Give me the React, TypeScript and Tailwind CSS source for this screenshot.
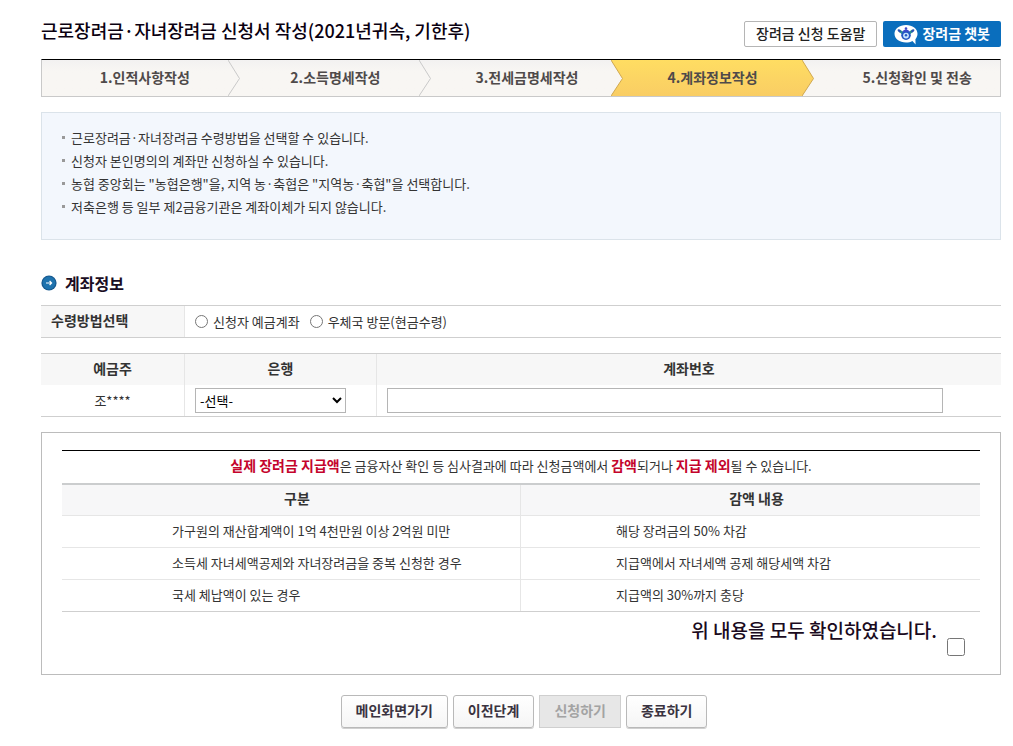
import { useState } from 'react';

const steps = [
  { label: '1.인적사항작성', pad: 'pl-5' },
  { label: '2.소득명세작성', pad: 'pl-3' },
  { label: '3.전세금명세작성', pad: 'pl-3' },
  { label: '4.계좌정보작성', pad: '' },
  { label: '5.신청확인 및 전송', pad: 'pl-5' },
];

const notices = [
  '근로장려금·자녀장려금 수령방법을 선택할 수 있습니다.',
  '신청자 본인명의의 계좌만 신청하실 수 있습니다.',
  '농협 중앙회는 "농협은행"을, 지역 농·축협은 "지역농·축협"을 선택합니다.',
  '저축은행 등 일부 제2금융기관은 계좌이체가 되지 않습니다.',
];

const deductions = [
  { reason: '가구원의 재산합계액이 1억 4천만원 이상 2억원 미만', detail: '해당 장려금의 50% 차감' },
  { reason: '소득세 자녀세액공제와 자녀장려금을 중복 신청한 경우', detail: '지급액에서 자녀세액 공제 해당세액 차감' },
  { reason: '국세 체납액이 있는 경우', detail: '지급액의 30%까지 충당' },
];

const CURRENT_STEP = 3;

const StepArrow = ({ index }: { index: number }) => {
  const active = index === CURRENT_STEP;
  const beforeActive = index === CURRENT_STEP - 1;
  return (
    <svg
      className={`h-full w-3 shrink-0 ${beforeActive ? 'bg-linear-to-b from-[#ffdd62] to-[#f9cd64]' : ''}`}
      viewBox="0 0 12 36"
      preserveAspectRatio="none"
      aria-hidden="true"
    >
      <defs>
        <linearGradient id={`step-${index}`} x1="0" y1="0" x2="0" y2="1">
          <stop offset="0" stopColor={active ? '#ffdd62' : '#f2f1f1'} />
          <stop offset="0.3" stopColor={active ? '#fdd863' : '#f8f6f3'} />
          <stop offset="1" stopColor={active ? '#f9cd64' : '#f8f6f3'} />
        </linearGradient>
      </defs>
      <path d="M0 0 L11.5 18.5 L0 36 Z" fill={`url(#step-${index})`} />
      <path
        d="M0 0 L11.5 18.5 L0 36"
        fill="none"
        stroke={active || beforeActive ? '#d0a850' : '#c9c9c9'}
        strokeWidth="1"
      />
    </svg>
  );
};

const ChatbotIcon = () => (
  <svg className="h-6 w-6" viewBox="0 0 24 24" aria-hidden="true">
    <path d="M12 3 C5.5 3 0.5 6.8 0.5 11.8 C0.5 17 5.5 20.5 12 20.5 C14.5 20.5 16.6 20 18.4 19 L21.6 22.5 L21.4 17.2 C22.8 15.6 23.5 13.8 23.5 11.8 C23.5 6.8 18.5 3 12 3 Z" fill="#fff" />
    <path d="M5.5 8.8 L8.5 11 M18.5 8.8 L15.5 11" stroke="#2a9a86" strokeWidth="2.6" strokeLinecap="round" />
    <path d="M4.6 8.2 L6 9.4 M19.4 8.2 L18 9.4" stroke="#2c4fb8" strokeWidth="2" strokeLinecap="round" />
    <circle cx="12" cy="13.2" r="4.8" fill="#2459c4" />
    <path d="M8 9.8 Q12 5.4 16 9.8 Z" fill="#3b49c9" />
    <circle cx="12" cy="6.6" r="1.3" fill="#3b49c9" />
    <circle cx="12" cy="13.6" r="2.9" fill="#c9e4fb" />
    <circle cx="12" cy="13.2" r="1.2" fill="#2459c4" />
  </svg>
);

const SectionIcon = () => (
  <svg className="h-4 w-4" viewBox="0 0 16 16" aria-hidden="true">
    <circle cx="8" cy="8" r="7.6" fill="#17598f" />
    <circle cx="8" cy="8" r="6.4" fill="#1f73ae" />
    <path d="M5 8 H10.6 M8.6 6 L10.6 8 L8.6 10" fill="none" stroke="#fff" strokeWidth="1.2" />
  </svg>
);

const buttonStyle =
  'h-[33px] rounded-[3px] border border-[#b9b9b9] bg-linear-to-b from-white to-[#f5f5f5] px-[14px] pb-1 text-[14px] font-bold text-[#3a3340] shadow-[0_1px_0_#d0d0d0]';

const App = () => {
  const [method, setMethod] = useState('');
  const [confirmed, setConfirmed] = useState(false);

  return (
    <div className="bg-white pt-5 pr-3 pb-4 pl-[41px] font-['Noto_Sans_CJK_KR',sans-serif] text-[13px] leading-5 text-[#333]">
      <header className="flex h-[39px] items-start justify-between">
        <h1 className="text-[18px] leading-5 font-medium text-[#0a0010]">
          근로장려금·자녀장려금 신청서 작성(2021년귀속, 기한후)
        </h1>
        <div className="flex gap-1.5 pt-px">
          <button type="button" className="h-[26px] rounded-xs border border-[#b5b5b5] px-[11px] pb-0.5 text-[14px] font-medium text-[#222]">
            장려금 신청 도움말
          </button>
          <button type="button" className="flex h-[26px] items-center gap-1 rounded-xs bg-[#0a6ebd] px-[11px] text-[14px] font-bold text-white">
            <ChatbotIcon />
            <span className="pb-0.5">장려금 챗봇</span>
          </button>
        </div>
      </header>

      <ol className="grid h-[38px] grid-cols-[198fr_192fr_192fr_192fr_186fr] border border-[#c9c9c9] border-t-black bg-linear-to-b from-[#f2f1f1] to-[#f8f6f3] to-30%">
        {steps.map((step, i) => (
          <li
            key={step.label}
            aria-current={i === CURRENT_STEP ? 'step' : undefined}
            className="flex h-9"
          >
            <span
              className={`flex flex-1 items-center justify-center pb-0.5 text-[14px] font-bold whitespace-nowrap text-[#4f4a4a] ${step.pad} ${i === CURRENT_STEP ? 'bg-linear-to-b from-[#ffdd62] to-[#f9cd64]' : ''}`}
            >
              {step.label}
            </span>
            {i < steps.length - 1 && <StepArrow index={i} />}
          </li>
        ))}
      </ol>

      <ul className="mt-[15px] border border-[#dbe3ea] bg-[#f3f7fd] pt-[13px] pb-[21px] pl-5 leading-[23px]">
        {notices.map((notice) => (
          <li key={notice} className="flex items-center gap-1.5">
            <span className="h-[3px] w-[3px] bg-[#999]" />
            {notice}
          </li>
        ))}
      </ul>

      <h2 className="mt-8 flex items-center gap-2 text-[16px] leading-[22px] font-bold text-[#1a0d22]">
        <SectionIcon />
        계좌정보
      </h2>

      <table className="mt-[11px] w-full table-fixed border-separate border-spacing-0 border-y border-[#cfcfcf]">
        <tbody>
          <tr className="h-[31px]">
            <th scope="row" className="w-36 border-r border-[#e6e6e6] bg-[#f7f7f7] pb-1 pl-2.5 text-left text-[14px] font-bold">
              수령방법선택
            </th>
            <td className="pl-2.5">
              <div className="flex items-center gap-2.5">
                <label className="flex items-center gap-[5px]">
                  <input type="radio" name="method" className="h-[13px] w-[13px]" checked={method === 'account'} onChange={() => setMethod('account')} />
                  신청자 예금계좌
                </label>
                <label className="flex items-center gap-[5px]">
                  <input type="radio" name="method" className="h-[13px] w-[13px]" checked={method === 'post'} onChange={() => setMethod('post')} />
                  우체국 방문(현금수령)
                </label>
              </div>
            </td>
          </tr>
        </tbody>
      </table>

      <table className="mt-[15px] w-full table-fixed border-separate border-spacing-0 border-y border-[#cfcfcf] text-center">
        <thead>
          <tr className="h-[31px] bg-[#f7f7f7] text-[14px]">
            <th scope="col" className="w-36 border-r border-[#e6e6e6] pb-1">예금주</th>
            <th scope="col" id="bank" className="w-48 border-r border-[#e6e6e6] pb-1">은행</th>
            <th scope="col" id="account-number" className="pb-1">계좌번호</th>
          </tr>
        </thead>
        <tbody>
          <tr className="h-[31px]">
            <td className="border-r border-[#e6e6e6]">조****</td>
            <td className="border-r border-[#e6e6e6] px-2.5 text-left">
              <select aria-labelledby="bank" className="block h-[25px] w-[151px] border border-[#b5b5b5] bg-white text-black">
                <option>-선택-</option>
              </select>
            </td>
            <td className="px-2.5">
              <input type="text" aria-labelledby="account-number" className="block h-[25px] w-[92%] border border-[#b5b5b5] px-1" />
            </td>
          </tr>
        </tbody>
      </table>

      <section className="mt-[15px] border border-[#bcbcbc] px-5 pt-[17px] pb-[17px]">
        <table
          aria-label="장려금 감액 안내"
          className="w-full table-fixed border-separate border-spacing-0 border-t border-b border-t-black border-b-[#cfcfcf]"
        >
          <thead>
            <tr className="h-[34px]">
              <td colSpan={2} className="border-b-2 border-[#cbcdce] pb-1 text-center">
                <strong className="text-[14px] text-[#c4042c]">실제 장려금 지급액</strong>은 금융자산 확인 등 심사결과에 따라 신청금액에서{' '}
                <strong className="text-[14px] text-[#c4042c]">감액</strong>되거나{' '}
                <strong className="text-[14px] text-[#c4042c]">지급 제외</strong>될 수 있습니다.
              </td>
            </tr>
            <tr className="h-[30px] bg-[#f7f7f8] text-[14px]">
              <th scope="col" className="border-r border-[#e6e6e6] pb-1 pl-3">구분</th>
              <th scope="col" className="pb-1 pl-3">감액 내용</th>
            </tr>
          </thead>
          <tbody>
            {deductions.map((row) => (
              <tr key={row.reason} className="h-8">
                <td className="border-t border-r border-[#e6e6e6] pb-0.5 pl-[110px]">{row.reason}</td>
                <td className="border-t border-[#e6e6e6] pb-0.5 pl-[95px]">{row.detail}</td>
              </tr>
            ))}
          </tbody>
        </table>
        <label className="mt-1.5 flex items-start justify-end gap-2.5 pr-[15px] pb-px text-[19px] leading-6 font-medium text-[#1a0a20]">
          위 내용을 모두 확인하였습니다.
          <input type="checkbox" className="mt-5 h-[18px] w-[18px]" checked={confirmed} onChange={(e) => setConfirmed(e.target.checked)} />
        </label>
      </section>

      <div className="mt-5 flex justify-center gap-[5px] pl-1.5">
        <button type="button" className={buttonStyle}>메인화면가기</button>
        <button type="button" className={buttonStyle}>이전단계</button>
        <button type="button" disabled className="h-[33px] border border-[#cfcfcf] bg-[#e7e7e7] px-[14px] pb-1 text-[14px] font-bold text-[#a3a3a3]">
          신청하기
        </button>
        <button type="button" className={buttonStyle}>종료하기</button>
      </div>
    </div>
  );
};

export default App;
